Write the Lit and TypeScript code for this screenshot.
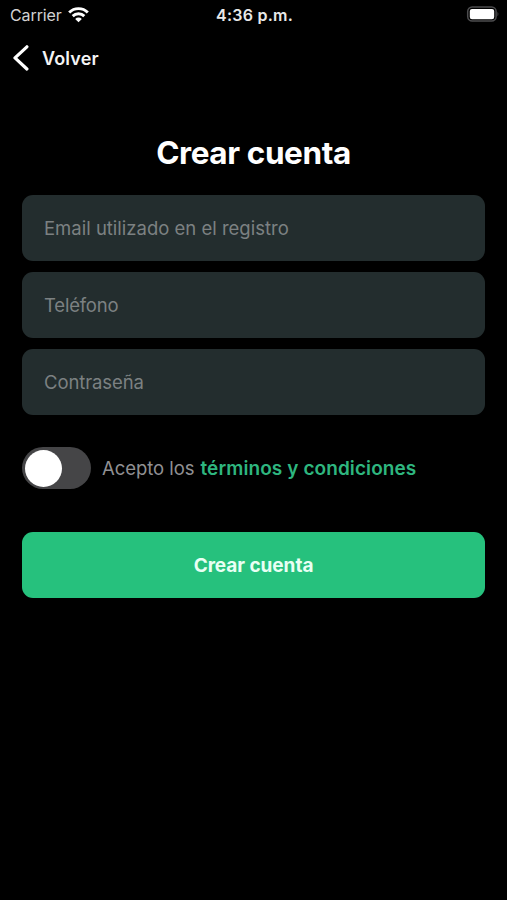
import { LitElement, html, css } from "lit";
import { customElement } from "lit/decorators.js";

@customElement("app-root")
export class AppRoot extends LitElement {
  static styles = css`
    :host {
      display: block;
      box-sizing: border-box;
      height: 900px;
      background: #000;
      color: #fff;
      font-family: Inter, "Liberation Sans", sans-serif;
      overflow: hidden;
    }
    * { box-sizing: border-box; }
    svg { display: block; }
    .status {
      display: grid;
      grid-template-columns: 1fr auto 1fr;
      align-items: center;
      height: 30px;
      padding: 0 8px 0 10px;
      line-height: 20px;
    }
    .carrier {
      display: flex;
      align-items: center;
      gap: 6px;
      font-size: 16px;
      letter-spacing: -0.1px;
      color: #d2d2d2;
    }
    .time { font-size: 16px; font-weight: 600; letter-spacing: 0.25px; color: #e8e8e8; }
    .battery { justify-self: end; }
    .nav {
      display: flex;
      align-items: center;
      gap: 13px;
      height: 56px;
      padding-left: 13px;
    }
    .back { padding-top: 2px; font-size: 18px; font-weight: 600; line-height: 24px; letter-spacing: 0.15px; color: #f4f4f4; }
    main { padding: 47px 22px 0; }
    h1 {
      margin: 0;
      font-size: 31.5px;
      line-height: 40px;
      font-weight: 700;
      letter-spacing: -0.4px;
      text-align: center;
    }
    .fields {
      display: flex;
      flex-direction: column;
      gap: 11px;
      margin-top: 22px;
    }
    input {
      display: block;
      width: 463px;
      height: 66px;
      margin: 0;
      padding: 0 22px;
      border: 0;
      outline: 0;
      border-radius: 11px;
      background: #232d2e;
      color: #fff;
      font-family: inherit;
      font-size: 18.5px;
    }
    input[type="tel"] { letter-spacing: -0.2px; }
    input[type="password"] { letter-spacing: -0.1px; }
    input::placeholder { color: #7c8182; opacity: 1; }
    .terms {
      display: flex;
      align-items: center;
      height: 42px;
      margin-top: 32px;
      font-size: 18.5px;
      line-height: 24px;
      color: #909093;
      white-space: nowrap;
    }
    .switch {
      display: flex;
      align-items: center;
      width: 69px;
      height: 42px;
      padding: 0 2.5px;
      margin-right: 11px;
      border-radius: 21px;
      background: #454547;
    }
    .knob { width: 37px; height: 37px; border-radius: 50%; background: #fff; }
    .accept { letter-spacing: -0.05px; }
    .link { margin-left: 6px; padding-top: 2px; font-size: 19px; font-weight: 600; letter-spacing: 0.09px; color: #2eb67f; }
    button {
      display: block;
      width: 463px;
      height: 66px;
      margin: 43px 0 0;
      padding: 0;
      border: 0;
      border-radius: 11px;
      background: #26c17d;
      color: #e9fff4;
      font-family: inherit;
      font-size: 19px;
      font-weight: 700;
      letter-spacing: -0.05px;
    }
  `;

  render() {
    return html`
      <header class="status">
        <div class="carrier">
          <span class="name">Carrier</span>
          <svg width="21" height="16" viewBox="0 0 21 16" fill="none" stroke="#fff" stroke-width="2.9">
            <path d="M1.2 5.5A13 13 0 0 1 19.8 5.5" />
            <path d="M4.7 9.1A8.2 8.2 0 0 1 16.3 9.1" />
            <path d="M10.5 15.2 7.2 11.9A4.7 4.7 0 0 1 13.8 11.9Z" fill="#fff" stroke="none" />
          </svg>
        </div>
        <span class="time">4:36 p.m.</span>
        <svg class="battery" width="33" height="18" viewBox="0 0 33 18">
          <rect x="1.7" y="0.9" width="28.4" height="14.2" rx="4.5" fill="none" stroke="#4c4c4e" stroke-width="1.5" />
          <rect x="3.8" y="2.9" width="24.4" height="10.3" rx="2.2" fill="#fff" />
          <path d="M31.5 5.7Q33.3 8 31.5 10.3Z" fill="#4c4c4e" />
        </svg>
      </header>
      <nav class="nav">
        <svg width="16" height="26" viewBox="0 0 16 26" fill="none" stroke="#fff" stroke-width="3.2" stroke-linecap="round" stroke-linejoin="round">
          <path d="M13.9 1.8 2 12.9 13.9 24" />
        </svg>
        <span class="back">Volver</span>
      </nav>
      <main>
        <h1><span class="title">Crear cuenta</span></h1>
        <div class="fields">
          <input type="email" placeholder="Email utilizado en el registro" />
          <input type="tel" placeholder="Teléfono" />
          <input type="password" placeholder="Contraseña" />
        </div>
        <div class="terms">
          <div class="switch" role="switch" aria-checked="false"><div class="knob"></div></div>
          <span class="accept">Acepto los</span>
          <span class="link">términos y condiciones</span>
        </div>
        <button type="button">Crear cuenta</button>
      </main>
    `;
  }
}
